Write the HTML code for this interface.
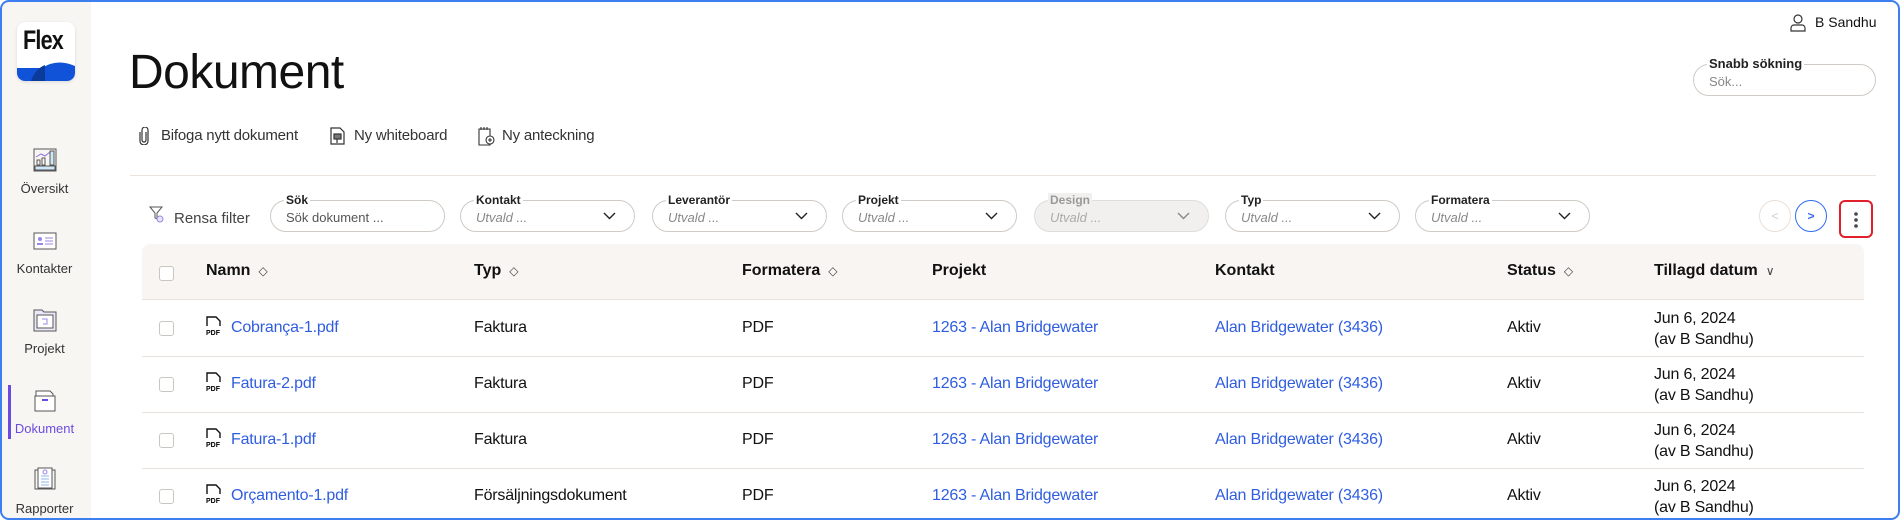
<!DOCTYPE html>
<html><head><meta charset="utf-8"><style>
*{box-sizing:border-box;margin:0;padding:0}
body{width:1900px;height:520px;overflow:hidden;background:#fff;font-family:"Liberation Sans",sans-serif;color:#111;position:relative}
.frame{position:absolute;left:0;top:0;width:1900px;height:520px;border:2px solid #3d7ff0;border-radius:9px;pointer-events:none;z-index:10}
.side{position:absolute;left:2px;top:2px;width:89px;height:516px;background:#f8f6f3;border-radius:7px 0 0 7px}
.a{position:absolute;white-space:nowrap}
.nav{position:absolute;left:0;width:89px;text-align:center;font-size:13px;color:#333}
.ic{position:absolute;left:33px;width:24px;height:24px}
.fld{position:absolute;top:200px;height:32px;width:175px;border:1px solid #cfcac5;border-radius:16px}
.fld .lb{position:absolute;left:13px;top:-8px;background:#fff;padding:0 2px;font-size:12px;font-weight:bold;color:#222;line-height:14px}
.fld .ph{position:absolute;left:15px;top:9px;font-size:13px;font-style:italic;color:#888}
.fld svg{position:absolute;right:18px;top:11px}
.hd{position:absolute;top:262px;font-size:16px;font-weight:bold}
.cell{position:absolute;font-size:16px;letter-spacing:-.2px}
.lnk{color:#2f5de0}
.cb{position:absolute;left:159px;width:15px;height:15px;border:1px solid #c9c5c1;border-radius:3px;background:#fff}
.sep{position:absolute;left:142px;width:1722px;height:1px;background:#e6e1dc}
.srt{font-weight:normal;font-size:12px;margin-left:8px;color:#444}
</style></head><body>
<div class="frame"></div>
<div class="side"></div>
<!-- logo -->
<div class="a" style="left:17px;top:22px;width:58px;height:59px;background:#fff;border-radius:8px;overflow:hidden;box-shadow:0 1px 3px rgba(0,0,0,.12)">
<div style="position:absolute;left:6px;top:3px;font-size:27px;font-weight:bold;letter-spacing:-1px;transform:scaleX(.8);transform-origin:left">Flex</div>
<svg style="position:absolute;left:0;bottom:0" width="58" height="22"><path d="M0 9 L25 9 Q40 -1 58 7 L58 22 L0 22Z" fill="#1052d8"/><path d="M14 22 Q18 10 28 6 L28 22Z" fill="#0a3a9a"/></svg>
</div>
<!-- nav -->
<svg class="ic" style="top:148px" viewBox="0 0 24 24" fill="none" stroke="#555" stroke-width="1"><rect x="1" y="1" width="22" height="22"/><path d="M3 9l5-3 4 2 5-4" stroke="#8c6fe0"/><rect x="4" y="12" width="3" height="5"/><rect x="9" y="10" width="3" height="7"/><rect x="17" y="3" width="4" height="14" fill="#cfe6f7"/><rect x="2" y="18" width="20" height="4" fill="#cfe6f7"/></svg>
<div class="nav" style="top:181px">Översikt</div>
<svg class="ic" style="top:229px" viewBox="0 0 24 20" fill="none" stroke="#555" stroke-width="1"><rect x="1" y="2" width="22" height="16" fill="#fff"/><circle cx="7" cy="8" r="2" fill="#9b86ea" stroke="none"/><path d="M4 14h6v-2H4z" fill="#9b86ea" stroke="none"/><path d="M12 7h8M12 10h8M12 13h8" stroke="#9b86ea"/></svg>
<div class="nav" style="top:261px">Kontakter</div>
<svg class="ic" style="top:308px" viewBox="0 0 24 24" fill="none" stroke="#555" stroke-width="1"><path d="M1 2h8l2 2h12v19H1z" fill="#ebe8f7"/><rect x="4" y="7" width="16" height="13" fill="#fff"/><path d="M9 11h5v5h-4" stroke="#9b86ea"/></svg>
<div class="nav" style="top:341px">Projekt</div>
<div class="a" style="left:8px;top:385px;width:3px;height:54px;background:#6a4de0"></div>
<svg class="ic" style="top:388px" viewBox="0 0 24 24" fill="none" stroke="#555" stroke-width="1"><path d="M3 3h14l3 3v2H3z" fill="#fff"/><rect x="2" y="8" width="20" height="15" fill="#fff"/><path d="M9 12h6" stroke="#6a4de0" stroke-width="2"/></svg>
<div class="nav" style="top:421px;color:#6a4de0">Dokument</div>
<svg class="ic" style="top:467px" viewBox="0 0 24 24" fill="none" stroke="#555" stroke-width="1"><rect x="2" y="3" width="20" height="19"/><rect x="5" y="1" width="14" height="20" fill="#fff"/><path d="M8 9h8M8 12h8M8 15h8M8 18h8" stroke="#8fb8e8"/><circle cx="12" cy="5" r="2" stroke="#9b86ea"/></svg>
<div class="nav" style="top:501px">Rapporter</div>

<!-- user -->
<svg class="a" style="left:1790px;top:14px" width="16" height="18" viewBox="0 0 16 18" fill="none" stroke="#333" stroke-width="1.2"><circle cx="8" cy="5" r="4"/><path d="M1 17v-3a3 3 0 0 1 3-3h8a3 3 0 0 1 3 3v3z"/></svg>
<div class="a" style="left:1815px;top:14px;font-size:14px">B Sandhu</div>
<!-- snabb -->
<div class="fld" style="left:1693px;top:64px;width:183px;height:32px"><span class="lb" style="font-size:13px">Snabb sökning</span><span class="ph" style="font-style:normal;top:9px">Sök...</span></div>

<div class="a" style="left:129px;top:45px;font-size:48px;letter-spacing:-.5px">Dokument</div>

<!-- actions -->
<svg class="a" style="left:139px;top:127px" width="10" height="18" viewBox="0 0 10 18" fill="none" stroke="#333" stroke-width="1.2"><path d="M7 5v8a2 2 0 0 1-4 0V3a3 3 0 0 1 6 0v11a4 4 0 0 1-8 0V5"/></svg>
<div class="a" style="left:161px;top:127px;font-size:15px;color:#333;letter-spacing:-.2px">Bifoga nytt dokument</div>
<svg class="a" style="left:330px;top:127px" width="15" height="18" viewBox="0 0 15 18" fill="none" stroke="#333" stroke-width="1.2"><path d="M1 1h9l4 4v12H1z"/><rect x="4" y="7" width="7" height="5" fill="#777"/><path d="M7 12v4"/></svg>
<div class="a" style="left:354px;top:127px;font-size:15px;color:#333;letter-spacing:-.2px">Ny whiteboard</div>
<svg class="a" style="left:478px;top:126px" width="18" height="20" viewBox="0 0 18 20" fill="none" stroke="#333" stroke-width="1.1"><path d="M1 3h11v16H1z"/><path d="M3 1v3M6 1v3M9 1v3" /><circle cx="12" cy="14" r="4" fill="#fff"/><path d="M12 12v4M10 14h4"/></svg>
<div class="a" style="left:502px;top:127px;font-size:15px;color:#333;letter-spacing:-.2px">Ny anteckning</div>

<div class="a" style="left:130px;top:175px;width:1746px;height:1px;background:#ebe4de"></div>

<!-- filters -->
<svg class="a" style="left:149px;top:206px" width="16" height="18" viewBox="0 0 16 18" fill="none" stroke="#555" stroke-width="1"><path d="M1 1h12l-5 6v6L6 12V7z"/><circle cx="11" cy="13" r="3" fill="#e9e2fb" stroke="#9b86ea"/></svg>
<div class="a" style="left:174px;top:210px;font-size:15px;color:#444">Rensa filter</div>
<div class="fld" style="left:270px"><span class="lb">Sök</span><span class="ph" style="font-style:normal;color:#555">Sök dokument ...</span></div>
<div class="fld" style="left:460px"><span class="lb">Kontakt</span><span class="ph">Utvald ...</span><svg width="13" height="8"><path d="M1 1l5.5 5.5L12 1" fill="none" stroke="#222" stroke-width="1.4"/></svg></div>
<div class="fld" style="left:652px"><span class="lb">Leverantör</span><span class="ph">Utvald ...</span><svg width="13" height="8"><path d="M1 1l5.5 5.5L12 1" fill="none" stroke="#222" stroke-width="1.4"/></svg></div>
<div class="fld" style="left:842px"><span class="lb">Projekt</span><span class="ph">Utvald ...</span><svg width="13" height="8"><path d="M1 1l5.5 5.5L12 1" fill="none" stroke="#222" stroke-width="1.4"/></svg></div>
<div class="fld" style="left:1034px;background:#f1f0ef;border-color:#ddd"><span class="lb" style="color:#999;background:#f1f0ef">Design</span><span class="ph" style="color:#aaa">Utvald ...</span><svg width="13" height="8"><path d="M1 1l5.5 5.5L12 1" fill="none" stroke="#888" stroke-width="1.4"/></svg></div>
<div class="fld" style="left:1225px"><span class="lb">Typ</span><span class="ph">Utvald ...</span><svg width="13" height="8"><path d="M1 1l5.5 5.5L12 1" fill="none" stroke="#222" stroke-width="1.4"/></svg></div>
<div class="fld" style="left:1415px"><span class="lb">Formatera</span><span class="ph">Utvald ...</span><svg width="13" height="8"><path d="M1 1l5.5 5.5L12 1" fill="none" stroke="#222" stroke-width="1.4"/></svg></div>

<div class="a" style="left:1759px;top:200px;width:32px;height:32px;border:1px solid #eadfd8;border-radius:50%;text-align:center;line-height:30px;font-size:12px;color:#ccc">&lt;</div>
<div class="a" style="left:1795px;top:200px;width:32px;height:32px;border:1px solid #2f6ef0;border-radius:50%;text-align:center;line-height:30px;font-size:12px;font-weight:bold;color:#2f6ef0">&gt;</div>
<div class="a" style="left:1839px;top:200px;width:34px;height:38px;border:2px solid #e0202a;border-radius:6px"><svg style="position:absolute;left:12px;top:9px" width="6" height="18"><circle cx="3" cy="3" r="1.8" fill="#444"/><circle cx="3" cy="9" r="1.8" fill="#444"/><circle cx="3" cy="15" r="1.8" fill="#444"/></svg></div>

<!-- table -->
<div class="a" style="left:142px;top:244px;width:1722px;height:55px;background:#f8f5f2;border-radius:8px 8px 0 0"></div>
<div class="cb" style="top:266px"></div>
<div class="hd" style="left:206px">Namn<span class="srt">◇</span></div>
<div class="hd" style="left:474px">Typ<span class="srt">◇</span></div>
<div class="hd" style="left:742px">Formatera<span class="srt">◇</span></div>
<div class="hd" style="left:932px">Projekt</div>
<div class="hd" style="left:1215px">Kontakt</div>
<div class="hd" style="left:1507px">Status<span class="srt">◇</span></div>
<div class="hd" style="left:1654px">Tillagd datum<span class="srt">∨</span></div>
<div class="sep" style="top:299px"></div>
<div class="sep" style="top:356px"></div>
<div class="sep" style="top:412px"></div>
<div class="sep" style="top:468px"></div>

<div class="cb" style="top:321px"></div><svg class="a" style="left:206px;top:316px" width="17" height="20" viewBox="0 0 17 20"><path d="M1 10V1h9l4 4v5" fill="none" stroke="#111" stroke-width="1.4"/><text x="0" y="19" font-size="7" font-weight="bold" font-family="Liberation Sans">PDF</text></svg>
<div class="cell lnk" style="left:231px;top:319px">Cobrança-1.pdf</div><div class="cell" style="left:474px;top:319px">Faktura</div><div class="cell" style="left:742px;top:319px">PDF</div><div class="cell lnk" style="left:932px;top:319px">1263 - Alan Bridgewater</div><div class="cell lnk" style="left:1215px;top:319px">Alan Bridgewater (3436)</div><div class="cell" style="left:1507px;top:319px">Aktiv</div><div class="cell" style="left:1654px;top:308px;line-height:21px">Jun 6, 2024<br>(av B Sandhu)</div>

<div class="cb" style="top:377px"></div><svg class="a" style="left:206px;top:372px" width="17" height="20" viewBox="0 0 17 20"><path d="M1 10V1h9l4 4v5" fill="none" stroke="#111" stroke-width="1.4"/><text x="0" y="19" font-size="7" font-weight="bold" font-family="Liberation Sans">PDF</text></svg>
<div class="cell lnk" style="left:231px;top:375px">Fatura-2.pdf</div><div class="cell" style="left:474px;top:375px">Faktura</div><div class="cell" style="left:742px;top:375px">PDF</div><div class="cell lnk" style="left:932px;top:375px">1263 - Alan Bridgewater</div><div class="cell lnk" style="left:1215px;top:375px">Alan Bridgewater (3436)</div><div class="cell" style="left:1507px;top:375px">Aktiv</div><div class="cell" style="left:1654px;top:364px;line-height:21px">Jun 6, 2024<br>(av B Sandhu)</div>

<div class="cb" style="top:433px"></div><svg class="a" style="left:206px;top:428px" width="17" height="20" viewBox="0 0 17 20"><path d="M1 10V1h9l4 4v5" fill="none" stroke="#111" stroke-width="1.4"/><text x="0" y="19" font-size="7" font-weight="bold" font-family="Liberation Sans">PDF</text></svg>
<div class="cell lnk" style="left:231px;top:431px">Fatura-1.pdf</div><div class="cell" style="left:474px;top:431px">Faktura</div><div class="cell" style="left:742px;top:431px">PDF</div><div class="cell lnk" style="left:932px;top:431px">1263 - Alan Bridgewater</div><div class="cell lnk" style="left:1215px;top:431px">Alan Bridgewater (3436)</div><div class="cell" style="left:1507px;top:431px">Aktiv</div><div class="cell" style="left:1654px;top:420px;line-height:21px">Jun 6, 2024<br>(av B Sandhu)</div>

<div class="cb" style="top:489px"></div><svg class="a" style="left:206px;top:484px" width="17" height="20" viewBox="0 0 17 20"><path d="M1 10V1h9l4 4v5" fill="none" stroke="#111" stroke-width="1.4"/><text x="0" y="19" font-size="7" font-weight="bold" font-family="Liberation Sans">PDF</text></svg>
<div class="cell lnk" style="left:231px;top:487px">Orçamento-1.pdf</div><div class="cell" style="left:474px;top:487px">Försäljningsdokument</div><div class="cell" style="left:742px;top:487px">PDF</div><div class="cell lnk" style="left:932px;top:487px">1263 - Alan Bridgewater</div><div class="cell lnk" style="left:1215px;top:487px">Alan Bridgewater (3436)</div><div class="cell" style="left:1507px;top:487px">Aktiv</div><div class="cell" style="left:1654px;top:476px;line-height:21px">Jun 6, 2024<br>(av B Sandhu)</div>
</body></html>
